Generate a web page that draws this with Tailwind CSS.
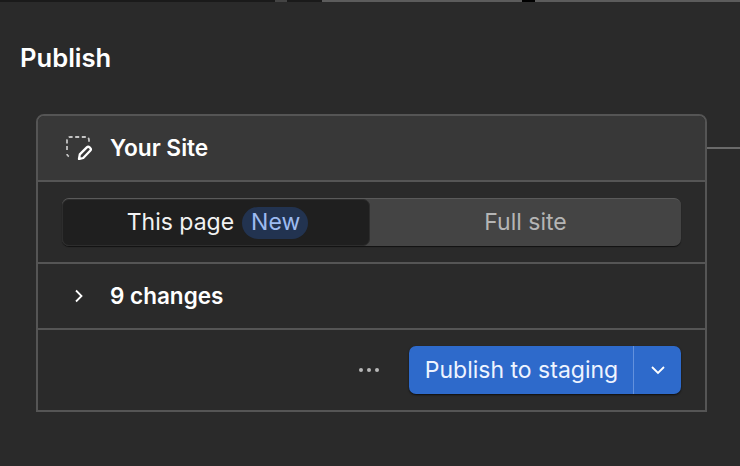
<!DOCTYPE html>
<html lang="en">

<head>
    <meta charset="UTF-8">
    <title>Publish</title>
    <script src="https://cdn.jsdelivr.net/npm/@tailwindcss/browser@4"></script>
</head>

<body class="bg-[#2a2a2a] font-['Inter',sans-serif] w-[740px] h-[466px] overflow-hidden relative">
    <!-- strip of the window above -->
    <div class="flex h-[2px]">
        <div class="w-[275px] bg-[#1a1a1a]"></div>
        <div class="w-[12px] bg-[#444444]"></div>
        <div class="w-[35px] bg-[#1a1a1a]"></div>
        <div class="flex-1 bg-[#5c5c5c]"></div>
        <div class="w-[13px] bg-black"></div>
        <div class="w-[205px] bg-[#5c5c5c]"></div>
    </div>

    <h1 class="pl-[20px] pt-[41px] text-[25.6px] leading-[30px] font-semibold text-white">Publish</h1>

    <div class="relative mt-[41px] ml-[36px] w-[671px] border-2 border-[#555555] rounded-tl-[8px] rounded-tr-[8px]">
        <!-- connector on the right -->
        <div class="absolute left-[669px] top-[31px] w-[33px] h-[2px] bg-[#6a6a6a]"></div>

        <div class="h-[66px] bg-[#383838] rounded-t-[6px] flex items-center pl-[28px] border-b-2 border-[#555555]">
            <svg class="w-[28px] h-[24px]" viewBox="0 0 28 24" fill="none">
                <path d="M1 14V4a3 3 0 0 1 3-3h16a3 3 0 0 1 3 3v3M1 18a3 3 0 0 0 2 2.5" stroke="#c4c4c4" stroke-width="1.8" stroke-dasharray="4 2.6"/>
                <path d="M13 23l.8-4.6 7-7a2 2 0 0 1 2.8 0l.6.6a2 2 0 0 1 0 2.8l-7 7.2z" stroke="#ffffff" stroke-width="2.3" stroke-linejoin="round"/>
            </svg>
            <span class="ml-[16px] text-[22.7px] font-semibold text-white">Your Site</span>
        </div>

        <div class="h-[82px] border-b-2 border-[#555555] flex items-center px-[24px]">
            <div class="w-[621px] h-[48px] flex rounded-[7px] bg-[#444444] shadow-[0_1px_1px_rgba(0,0,0,0.6)] border-t border-[#5a5a5a]">
                <div class="w-[308px] flex items-center justify-center gap-[8px] bg-[#1f1f1f] rounded-[7px] border border-[#2d2d2d] pl-[3px]">
                    <span class="text-[23px] text-[#f2f2f2]">This page</span>
                    <span class="pl-[9px] pr-[8px] h-[32px] flex items-center rounded-full bg-[#223350] text-[23px] text-[#9dbbf0]">New</span>
                </div>
                <div class="flex-1 flex items-center justify-center text-[23px] text-[#b5b5b5]">Full site</div>
            </div>
        </div>

        <div class="h-[66px] border-b-2 border-[#555555] flex items-center pl-[35px]">
            <svg class="w-[12px] h-[14px]" viewBox="0 0 12 14" fill="none">
                <path d="M3 1.5l5.5 5.5L3 12.5" stroke="#ffffff" stroke-width="1.8"/>
            </svg>
            <span class="ml-[25px] text-[22.5px] font-semibold text-white">9 changes</span>
        </div>

        <div class="h-[80px] flex items-center justify-end pr-[24px]">
            <div class="flex gap-[4px] mr-[30px]">
                <span class="w-[4px] h-[4px] rounded-full bg-[#b8b8b8]"></span>
                <span class="w-[4px] h-[4px] rounded-full bg-[#b8b8b8]"></span>
                <span class="w-[4px] h-[4px] rounded-full bg-[#b8b8b8]"></span>
            </div>
            <div class="flex h-[48px] rounded-[7px] bg-[#2e6acb] shadow-[0_1px_2px_rgba(0,0,0,0.7)]">
                <div class="w-[225px] flex items-center justify-center text-[23px] text-[#eef4ff] border-r border-[#6391dd] pl-[1px]">Publish to staging</div>
                <div class="w-[47px] flex items-center justify-center">
                    <svg class="w-[16px] h-[10px]" viewBox="0 0 16 10" fill="none">
                        <path d="M2 2l6 6 6-6" stroke="#ffffff" stroke-width="1.8"/>
                    </svg>
                </div>
            </div>
        </div>
    </div>
</body>

</html>
